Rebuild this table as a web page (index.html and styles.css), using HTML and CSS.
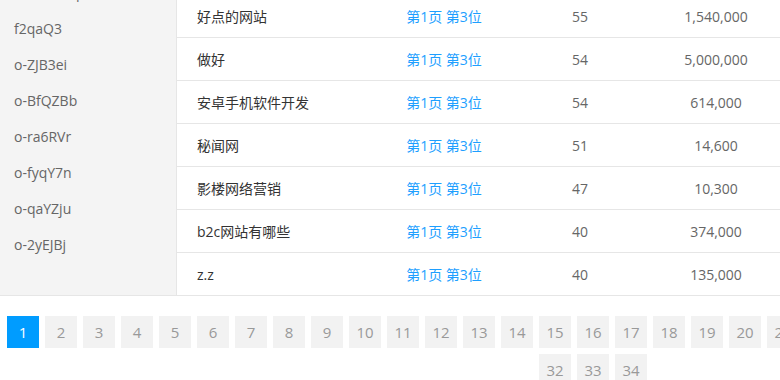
FILE: index.html
```html
<!DOCTYPE html>
<html lang="zh-CN">
<head>
<meta charset="utf-8">
<title>关键词排名</title>
<link rel="stylesheet" href="styles.css">
</head>
<body>
<div class="page">
  <div class="panel">
    <aside class="side">
      <a class="side-item">o-kLm2Pq</a>
      <a class="side-item">f2qaQ3</a>
      <a class="side-item">o-ZJB3ei</a>
      <a class="side-item">o-BfQZBb</a>
      <a class="side-item">o-ra6RVr</a>
      <a class="side-item">o-fyqY7n</a>
      <a class="side-item">o-qaYZju</a>
      <a class="side-item">o-2yEJBj</a>
    </aside>
    <div class="table">
      <div class="row head"></div>
      <div class="row"><span class="kw">好点的网站</span><span class="rank">第1页 第3位</span><span class="num">55</span><span class="num">1,540,000</span><span></span></div>
      <div class="row"><span class="kw">做好</span><span class="rank">第1页 第3位</span><span class="num">54</span><span class="num">5,000,000</span><span></span></div>
      <div class="row"><span class="kw">安卓手机软件开发</span><span class="rank">第1页 第3位</span><span class="num">54</span><span class="num">614,000</span><span></span></div>
      <div class="row"><span class="kw">秘闻网</span><span class="rank">第1页 第3位</span><span class="num">51</span><span class="num">14,600</span><span></span></div>
      <div class="row"><span class="kw">影楼网络营销</span><span class="rank">第1页 第3位</span><span class="num">47</span><span class="num">10,300</span><span></span></div>
      <div class="row"><span class="kw">b2c网站有哪些</span><span class="rank">第1页 第3位</span><span class="num">40</span><span class="num">374,000</span><span></span></div>
      <div class="row"><span class="kw">z.z</span><span class="rank">第1页 第3位</span><span class="num">40</span><span class="num">135,000</span><span></span></div>
    </div>
  </div>
  <nav class="pager">
    <a class="pg active">1</a><a class="pg">2</a><a class="pg">3</a><a class="pg">4</a><a class="pg">5</a><a class="pg">6</a><a class="pg">7</a><a class="pg">8</a><a class="pg">9</a><a class="pg">10</a><a class="pg">11</a><a class="pg">12</a><a class="pg">13</a><a class="pg">14</a><a class="pg">15</a><a class="pg">16</a><a class="pg">17</a><a class="pg">18</a><a class="pg">19</a><a class="pg">20</a><a class="pg">21</a><a class="pg">22</a><a class="pg">23</a><a class="pg">24</a><a class="pg">25</a><a class="pg">26</a><a class="pg">27</a><a class="pg">28</a><a class="pg">29</a><a class="pg">30</a><a class="pg">31</a><a class="pg">32</a><a class="pg">33</a><a class="pg">34</a>
  </nav>
</div>
</body>
</html>
```
FILE: styles.css
```css
html, body {
  margin: 0;
  padding: 0;
  overflow: hidden;
  background: #fff;
}
body {
  font-family: "Open Sans", "Noto Sans CJK SC", sans-serif;
  font-size: 14px;
  color: #333;
}
.page {
  margin-top: -48px;
  width: 1200px;
}
.panel {
  display: flex;
  border-bottom: 1px solid #e6e6e6;
}
.side {
  width: 176px;
  flex: none;
  background: #f4f4f4;
  border-right: 1px solid #e6e6e6;
  padding-top: 22px;
}
.side-item {
  display: block;
  height: 36px;
  line-height: 37px;
  padding-left: 14px;
  color: #666;
}
.table {
  flex: 1;
}
.row {
  display: grid;
  grid-template-columns: 199px 136px 136px 136px 1fr;
  align-items: center;
  height: 42px;
  border-bottom: 1px solid #e6e6e6;
}
.row:last-child {
  border-bottom: none;
}
.kw {
  padding-left: 20px;
  color: #333;
}
.rank {
  text-align: center;
  color: #1e9fff;
}
.num {
  text-align: center;
  color: #666;
}
.pager {
  width: 1186px;
  margin-top: 20px;
  display: flex;
  flex-wrap: wrap;
  justify-content: center;
  gap: 6px;
}
.pg {
  width: 32px;
  height: 32px;
  line-height: 32px;
  text-align: center;
  background: #f2f2f2;
  color: #999;
  font-size: 15px;
}
.pg.active {
  background: #009cff;
  color: #fff;
}
```
